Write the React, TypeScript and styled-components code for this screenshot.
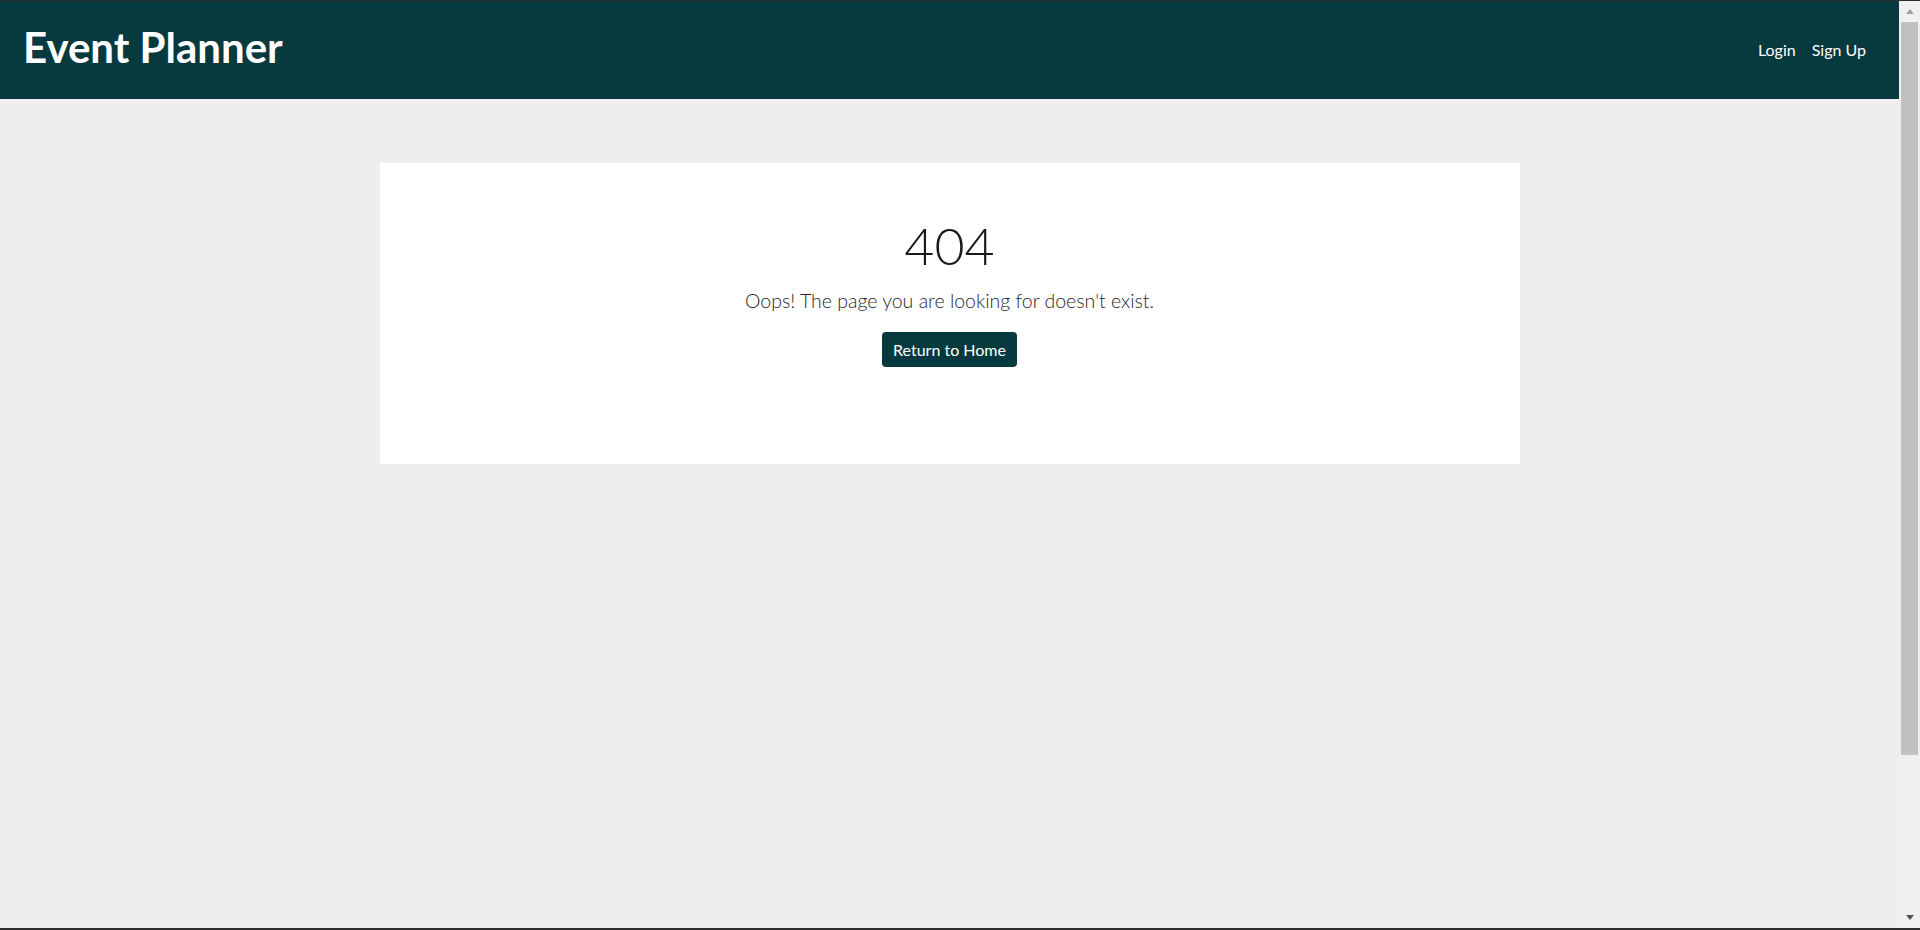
import React from "react";
import styled, { createGlobalStyle } from "styled-components";

const GlobalStyle = createGlobalStyle`
  html, body { margin: 0; padding: 0; height: 100%; overflow: hidden; }
  body {
    background: #efedee;
    font-family: "Lato", "Open Sans", sans-serif;
    color: #212529;
  }
  #root { height: 100%; }
`;

const Frame = styled.div`
  height: 100vh;
  display: flex;
  flex-direction: column;
  border-top: 1px solid #2b2b2b;
  border-bottom: 2px solid #2d2d2d;
  box-sizing: border-box;
`;

const Window = styled.div`
  flex: 1;
  display: flex;
  min-height: 0;
`;

const Viewport = styled.div`
  flex: 1;
  display: flex;
  flex-direction: column;
`;

const Header = styled.header`
  height: 98px;
  flex-shrink: 0;
  background: #073a3f;
  box-sizing: border-box;
  display: flex;
  align-items: center;
  justify-content: space-between;
  padding: 0 33px 7px 23px;
`;

const Brand = styled.a`
  color: #ffffff;
  font-size: 42px;
  font-weight: 700;
  line-height: 1;
  text-decoration: none;
`;

const Nav = styled.nav`
  display: flex;
  gap: 16px;
  margin-top: 6px;
`;

const NavLink = styled.a`
  color: #ffffff;
  font-size: 16px;
  line-height: 1;
  text-decoration: none;
`;

const Main = styled.main`
  display: flex;
  flex-direction: column;
  align-items: center;
  padding-top: 64px;
`;

const Card = styled.section`
  width: 1140px;
  height: 301px;
  box-sizing: border-box;
  background: #ffffff;
  display: flex;
  flex-direction: column;
  align-items: center;
  padding-top: 56px;
`;

const Code = styled.h1`
  margin: 0;
  font-size: 52px;
  font-weight: 300;
  line-height: 1;
  color: #1a1a1a;
`;

const Lead = styled.p`
  margin: 20px 0 21px;
  font-size: 19.5px;
  font-weight: 300;
  line-height: 1;
  color: #1f1f2b;
`;

const HomeButton = styled.a`
  display: inline-block;
  height: 35px;
  line-height: 35px;
  background: #073a3f;
  color: #fff;
  font-size: 16px;
  padding: 0 11.5px;
  border-radius: 4px;
  text-decoration: none;
`;

const Scrollbar = styled.div`
  width: 21px;
  flex-shrink: 0;
  background: #f0f0f0;
  display: flex;
  flex-direction: column;
  align-items: center;
`;

const Arrow = styled.div<{ $down?: boolean; $color: string }>`
  height: 21px;
  width: 100%;
  display: flex;
  align-items: center;
  justify-content: center;
  &::before {
    content: "";
    border-left: 4.5px solid transparent;
    border-right: 4.5px solid transparent;
    ${(p) =>
      p.$down
        ? `border-top: 5px solid ${p.$color};`
        : `border-bottom: 5px solid ${p.$color};`}
  }
`;

const Track = styled.div`
  flex: 1;
  width: 100%;
  display: flex;
  justify-content: center;
`;

const Thumb = styled.div`
  width: 17px;
  height: 733px;
  background: #c1c1c1;
`;

export default function App() {
  return (
    <>
      <GlobalStyle />
      <Frame>
        <Window>
          <Viewport>
            <Header>
              <Brand href="#">Event Planner</Brand>
              <Nav>
                <NavLink href="#">Login</NavLink>
                <NavLink href="#">Sign Up</NavLink>
              </Nav>
            </Header>
            <Main>
              <Card>
                <Code>404</Code>
                <Lead>Oops! The page you are looking for doesn't exist.</Lead>
                <HomeButton href="#">Return to Home</HomeButton>
              </Card>
            </Main>
          </Viewport>
          <Scrollbar>
            <Arrow $color="#a3a3a3" />
            <Track>
              <Thumb />
            </Track>
            <Arrow $down $color="#505050" />
          </Scrollbar>
        </Window>
      </Frame>
    </>
  );
}
